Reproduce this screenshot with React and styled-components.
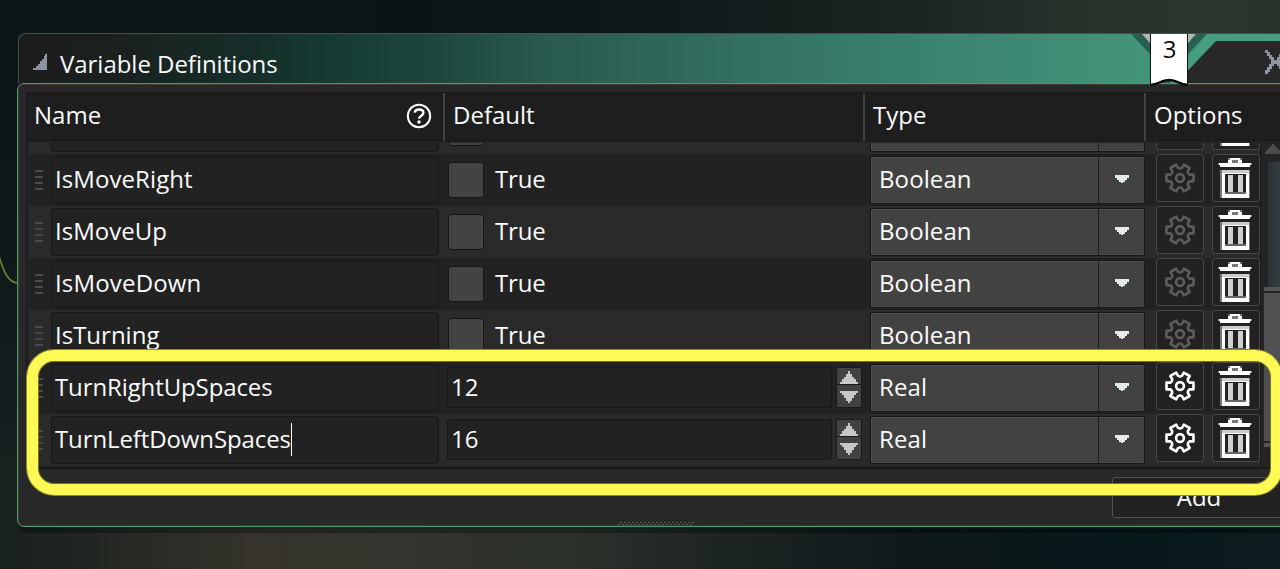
import React from "react";
import styled, { createGlobalStyle } from "styled-components";

const GlobalStyle = createGlobalStyle`
  * { box-sizing: border-box; }
  html, body { margin: 0; height: 569px; overflow: hidden; background: #0f1819; }
  svg { display: block; flex: none; }
`;

const Workspace = styled.main`
  position: relative;
  width: 1280px;
  height: 569px;
  overflow: hidden;
  padding: 33px 0 0 17px;
  color: #fbfbfb;
  font: 24px/32px "Open Sans", "Noto Sans", sans-serif;
  background:
    linear-gradient(to right, #182120 0, #222622 90px, #35332b 250px, #33342d 400px, #2b302a 580px, #1b2422 740px, #0f191b 900px, #08181a 1120px, #0d1c20 1280px) bottom / 100% 100px no-repeat,
    linear-gradient(to right, #0d1618 0, #0a1416 420px, #101a1a 700px, #1a2422 900px, #29312b 1080px, #2c362e 1230px, #29332c 1280px) top / 100% 90px no-repeat,
    linear-gradient(to bottom, #0d1618 90px, #101b1c 340px, #182120 469px);
`;

const Wire = styled.svg`
  position: absolute;
  left: 0;
  top: 250px;
`;

const Window = styled.section`
  display: flex;
  flex-direction: column;
  width: 1284px;
`;

const TitleBar = styled.header`
  position: relative;
  display: flex;
  align-items: center;
  height: 50px;
  margin-left: 1px;
  padding: 10px 0 0 14px;
  border: 1px solid #43504c;
  border-width: 1px 0 0 1px;
  border-radius: 8px 0 0 0;
  background: linear-gradient(to right, #1d1c1d 0, #1a211f 100px, #162e29 235px, #153a32 305px, #1d483e 420px, #28594c 520px, #327061 720px, #3a8470 920px, #429379 1120px, #489f83 1280px);
`;

const CollapseIcon = styled.svg`
  margin-top: -4px;
`;

const Title = styled.h1`
  margin: 0 0 0 13px;
  font: inherit;
  letter-spacing: -0.03px;
`;

const TitleCorner = styled.svg`
  position: absolute;
  right: 21px;
  top: 0;
`;

const Bookmark = styled.div`
  position: absolute;
  z-index: 2;
  left: 1150px;
  top: 34px;
  width: 39px;
  height: 53px;
  color: #0a0a0a;
  text-align: center;
  svg { position: absolute; inset: 0; }
  span { position: relative; top: -1px; }
`;

const Body = styled.div`
  position: relative;
  height: 444px;
  padding: 8px 0 0 8px;
  border: 1px solid #4f9b66;
  border-radius: 7px;
  background: #282828;
  box-shadow: 2px 6px 0 #0000004d, inset 0 0 0 1px #3a3a3a;
`;

const Table = styled.div`
  width: 1290px;
  height: 377px;
  border: 1px solid #191919;
  border-width: 1px 0 2px 1px;
  background: #242424;
`;

const HeadRow = styled.div`
  display: grid;
  grid-template-columns: 416px 420px 281px 150px;
  height: 50px;
  padding-bottom: 2px;
  background: linear-gradient(#1e1e1e 47px, #171717 47px 48px, #242424 48px);
`;

const HeadCell = styled.div`
  display: flex;
  align-items: center;
  justify-content: space-between;
  padding: 0 11px 5px ${(p) => (p.$first ? "7px" : "8px")};
  border-left: ${(p) => (p.$first ? "0" : "2px solid #424242")};
  svg { margin-top: 2px; }
`;

const Scroller = styled.div`
  display: flex;
  height: 324px;
`;

const Rows = styled.div`
  width: 1234px;
  height: 324px;
  padding: 0 0 1px 2px;
  overflow: hidden;
  display: flex;
  flex-direction: column;
  justify-content: flex-end;
  border-right: 1px solid #191919;
`;

const Row = styled.div`
  flex: none;
  display: flex;
  align-items: flex-start;
  height: 52px;
  background: ${(p) => (p.$light ? "#2a2a2a" : "#222")};
`;

const Grip = styled.div`
  display: flex;
  flex-direction: column;
  gap: 4px;
  width: 22px;
  padding: 16px 8px 0 6px;
  i { height: 2px; background: #4b4b4b; }
`;

const NameField = styled.div`
  width: 388px;
  height: 48px;
  margin-top: 2px;
  padding: 5px 3px 7px;
  display: flex;
  align-items: center;
  border: 1px solid #181818;
  border-radius: 3px;
  background: #222;
  letter-spacing: ${(p) => p.$tracking || 0}px;
`;

const Caret = styled.i`
  width: 1px;
  height: 33px;
  background: #fff;
`;

const DefaultCell = styled.div`
  display: flex;
  width: 431px;
  padding-left: 9px;
`;

const Checkbox = styled.div`
  width: 36px;
  height: 36px;
  margin: 8px 11px 0 0;
  border: 1px solid #171717;
  border-radius: 3px;
  background: #424443;
`;

const CheckLabel = styled.span`
  padding-top: 9px;
  letter-spacing: -0.15px;
`;

const NumberField = styled.div`
  width: 385px;
  height: 41px;
  margin: 5px 4px 0 -1px;
  padding: 3px 3px;
  border: 1px solid #191919;
  border-radius: 2px;
  background: #222;
`;

const Spinner = styled.div`
  width: 26px;
  height: 41px;
  margin-top: 5px;
  border: 1px solid #1a1a1a;
  border-radius: 2px;
  background: linear-gradient(#424242 0 16px, #191919 16px 17px, #424242 17px);
`;

const Select = styled.div`
  display: flex;
  width: 275px;
  height: 48px;
  margin-top: 2px;
  border: 1px solid #171717;
  border-radius: 2px;
  background: #424242;
  box-shadow: inset 1px 1px 0 #4e4e4e, inset 0 -1px 0 #4a4a4a;
`;

const SelectValue = styled.div`
  width: 228px;
  padding: 6px 8px;
  border-right: 1px solid #1e1e1e;
  letter-spacing: 0.1px;
`;

const SelectArrow = styled.div`
  display: flex;
  flex: 1;
  justify-content: center;
  padding-top: 18px;
`;

const IconButton = styled.div`
  width: 48px;
  height: 48px;
  margin-left: ${(p) => p.$gap}px;
  border: 1px solid #484848;
  border-radius: 3px;
  background: #222;
  svg { margin: -1px; }
`;

const ScrollBar = styled.div`
  display: flex;
  flex-direction: column;
  width: 24px;
  padding: 1px 0 0 3px;
  background: #242424;
  svg { margin-left: 1px; }
`;

const Track = styled.div`
  width: 14px;
  height: 125px;
  margin: 8px 0 0 4px;
  background: linear-gradient(to right, #2c3236, #353f46);
`;

const Thumb = styled.div`
  width: 20px;
  height: 160px;
  background: linear-gradient(#565656 0 4px, #242424 4px 6px, #505050 6px 154px, #242424 154px 156px, #565656 156px);
`;

const AddButton = styled.div`
  width: 174px;
  height: 41px;
  margin: 8px 0 0 1086px;
  padding-top: 3px;
  border: 1px solid #505050;
  border-radius: 3px;
  background: #222;
  text-align: center;
`;

const ResizeGrip = styled.svg`
  position: absolute;
  left: 600px;
  bottom: 0;
`;

const Highlight = styled.div`
  position: absolute;
  z-index: 3;
  left: 27px;
  top: 350px;
  width: 1255px;
  height: 145px;
  border: 11px solid #fff955;
  border-radius: 27px;
  box-shadow: 0 0 0 1px #8c882c, inset 0 0 0 1px #77742a;
`;

const gearPath = (() => {
  const pts = [];
  for (let k = 0; k < 6; k++) {
    [[-19, 10.3], [-14, 13.9], [14, 13.9], [19, 10.3], [30, 9.4]].forEach(([d, r]) => {
      const a = ((k * 60 + d) * Math.PI) / 180;
      pts.push(`${(24 + r * Math.cos(a)).toFixed(2)} ${(24 + r * Math.sin(a)).toFixed(2)}`);
    });
  }
  return `M${pts.join("L")}Z`;
})();

const GearIcon = ({ active }) => (
  <svg width="48" height="48" fill="none" stroke={active ? "#fff" : "#5b5b5b"} strokeWidth="2.6" strokeLinejoin="round">
    <path d={gearPath} />
    <circle cx="24" cy="24" r="3.9" />
  </svg>
);

const TrashIcon = () => (
  <svg width="48" height="48" shapeRendering="crispEdges">
    <path fill="#777" d="M16 4h14v5H16zM6 9h34v2H6zM8 16h30v28H8z" />
    <path fill="#fff" d="M18 4h10v2H18zM16 6h4v4h-4zM26 6h4v4h-4zM7 9h32v2H7zM8 11h30v2H8z" />
    <path fill="#ccc" d="M10 16h27v3H10z" />
    <path fill="#fff" d="M10 19h27v25H10z" />
    <path fill="#222" d="M13 20h21v20H13z" />
    <path fill="#666" d="M13 38h21v2H13z" />
    <path fill="#d0d0d0" d="M16 21h5v17h-5zM26 21h5v17h-5z" />
  </svg>
);

const HelpIcon = () => (
  <svg width="26" height="26" fill="none" stroke="#fff" strokeWidth="2">
    <circle cx="13" cy="13" r="11.2" />
    <path strokeWidth="2.4" d="M8.7 9.7C9 7.5 10.7 6.5 13 6.5c2.5 0 4.4 1.2 4.4 3.3 0 3-4.3 2.7-4.3 6" />
    <circle cx="13" cy="19" r="1.7" fill="#fff" stroke="none" />
  </svg>
);

const DownArrow = () => (
  <svg width="14" height="9" shapeRendering="crispEdges" fill="#e2ebe7">
    <path d="M0 0h14v3h-2v2h-2v2H8v1H6V7H4V5H2V3H0z" />
  </svg>
);

const SpinArrows = () => (
  <svg width="24" height="39" shapeRendering="crispEdges" fill="#c4c8c8">
    <path d="M11 3h2v3h2v3h2v2h2v3h2v2H3v-2h2v-3h2V9h2V6h2zM3 23h18v2h-2v2h-2v3h-2v3h-2v2h-2v-2H9v-3H7v-3H5v-2H3z" />
  </svg>
);

const ScrollArrow = () => (
  <svg width="16" height="10" shapeRendering="crispEdges" fill="#4c4c4c">
    <path d="M7 0h2v2h2v2h2v2h2v2h1v2H0V8h1V6h2V4h2V2h2z" />
  </svg>
);

const variables = [
  { name: "IsMoveRight", type: "Boolean", tracking: 0.08 },
  { name: "IsMoveUp", type: "Boolean" },
  { name: "IsMoveDown", type: "Boolean", tracking: 0.17 },
  { name: "IsTurning", type: "Boolean" },
  { name: "TurnRightUpSpaces", type: "Real", value: "12", tracking: -0.11 },
  { name: "TurnLeftDownSpaces", type: "Real", value: "16", tracking: -0.11, editing: true },
];

const VariableRow = ({ item = {}, light }) => (
  <Row $light={light}>
    <Grip><i /><i /><i /><i /></Grip>
    <NameField $tracking={item.tracking}>{item.name}{item.editing && <Caret />}</NameField>
    <DefaultCell>
      {item.value ? (
        <>
          <NumberField>{item.value}</NumberField>
          <Spinner><SpinArrows /></Spinner>
        </>
      ) : (
        <>
          <Checkbox />
          {item.name && <CheckLabel>True</CheckLabel>}
        </>
      )}
    </DefaultCell>
    <Select>
      <SelectValue>{item.type}</SelectValue>
      <SelectArrow><DownArrow /></SelectArrow>
    </Select>
    <IconButton $gap={11}><GearIcon active={item.type === "Real"} /></IconButton>
    <IconButton $gap={8}><TrashIcon /></IconButton>
  </Row>
);

export default function App() {
  return (
    <Workspace>
      <GlobalStyle />
      <Wire width="18" height="36" fill="none" stroke="#6f8429" strokeWidth="1.6">
        <path d="M-1 6C3 20 8 33 18 33" />
      </Wire>
      <Window>
        <TitleBar>
          <CollapseIcon width="14" height="16" shapeRendering="crispEdges" fill="#8b95a3">
            <path d="M12 0h2v16H0v-2h3v-2h2v-2h2V7h2V5h2V2h1z" />
          </CollapseIcon>
          <Title>Variable Definitions</Title>
          <TitleCorner width="150" height="49">
            <path fill="#275f50" d="M1 0h76L58 20v29H20V20z" />
            <path fill="#479f83" d="M77 0h73v49H40z" />
            <path fill="#b5b5b5" d="M12 0h54L58 9 20 9z" />
            <path fill="#282828" d="M86 7h64v42H46z" />
            <path fill="#8b95a3" shapeRendering="crispEdges" d="M135 16h3v2h2v3h2v2h2v3h3v-3h2v-3h1v15h-1v-3h-2v-2h-3v2h-2v3h-2v3h-2v2h-3v-4h2v-3h2v-3h2v-5h-2v-3h-2v-3h-2z" />
          </TitleCorner>
        </TitleBar>
        <Body>
          <Table>
            <HeadRow>
              <HeadCell $first>Name<HelpIcon /></HeadCell>
              <HeadCell>Default</HeadCell>
              <HeadCell>Type</HeadCell>
              <HeadCell>Options</HeadCell>
            </HeadRow>
            <Scroller>
              <Rows>
                <VariableRow light />
                {variables.map((item, i) => (
                  <VariableRow key={item.name} item={item} light={i % 2 === 1} />
                ))}
              </Rows>
              <ScrollBar>
                <ScrollArrow />
                <Track />
                <Thumb />
              </ScrollBar>
            </Scroller>
          </Table>
          <AddButton>Add</AddButton>
          <ResizeGrip width="78" height="4" shapeRendering="crispEdges">
            <path stroke="#5a5a5a" strokeWidth="1" strokeDasharray="2 2" d="M2 .5h76M0 2.5h76" />
          </ResizeGrip>
        </Body>
      </Window>
      <Bookmark>
        <svg width="39" height="53">
          <path fill="#fff" stroke="#111" d="M.5-1v52l10-3q9-4 18 0l9 3V-1z" />
          <path fill="none" stroke="#0a0a0a" strokeWidth="2.5" d="M.5 51Q7 50 12 47.5q7-3 14 0 5 2.5 11.5 3.5" />
        </svg>
        <span>3</span>
      </Bookmark>
      <Highlight />
    </Workspace>
  );
}
